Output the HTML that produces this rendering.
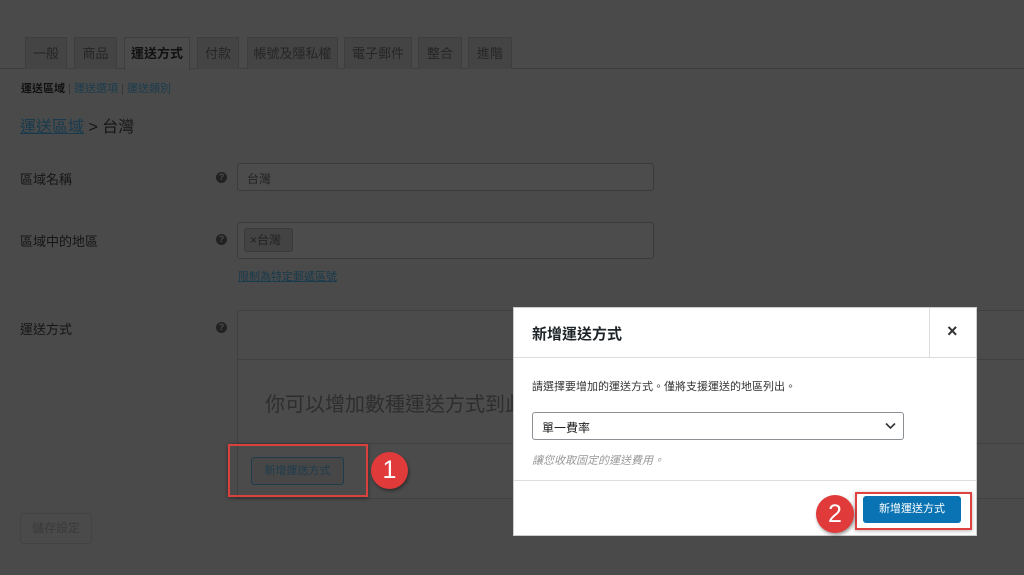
<!DOCTYPE html>
<html><head><meta charset="utf-8"><style>
*{box-sizing:border-box;margin:0;padding:0}
body{width:1024px;height:575px;background:#4a4a4a;font-family:"Liberation Sans","Noto Sans CJK TC",sans-serif;position:relative;overflow:hidden;color:#151515}
.a{position:absolute}
.tab{position:absolute;top:37px;height:32px;background:#444;border:1px solid #3e3e3e;border-bottom:none;font-size:13px;color:#252525;text-align:center;line-height:31px}
.tab.on{background:#4b4b4b;color:#111;font-weight:bold}
.inp{position:absolute;border:1px solid #3a3a3a;border-radius:3px;background:#4c4c4c}
.q{position:absolute;width:11px;height:11px;border-radius:50%;background:#222;color:#4a4a4a;font-size:9px;font-weight:bold;text-align:center;line-height:11px}
.lbl{position:absolute;left:20px;font-size:13px;color:#151515}
</style></head><body>
<div class="a" style="left:0;top:68px;width:1024px;height:1px;background:#3e3e3e"></div>
<div class="tab" style="left:25px;width:42px">一般</div>
<div class="tab" style="left:74px;width:43px">商品</div>
<div class="tab on" style="left:124px;width:66px;height:33px">運送方式</div>
<div class="tab" style="left:197px;width:42px">付款</div>
<div class="tab" style="left:247px;width:91px">帳號及隱私權</div>
<div class="tab" style="left:344px;width:68px">電子郵件</div>
<div class="tab" style="left:418px;width:44px">整合</div>
<div class="tab" style="left:468px;width:44px">進階</div>
<div class="a" style="left:21px;top:80px;font-size:11px;color:#111"><b>運送區域</b> <span style="color:#333">|</span> <span style="color:#1a3c4d">運送選項</span> <span style="color:#333">|</span> <span style="color:#1a3c4d">運送類別</span></div>
<div class="a" style="left:20px;top:113px;font-size:16px;color:#151515"><span style="color:#183b4d;text-decoration:underline">運送區域</span> &gt; 台灣</div>
<div class="lbl" style="top:169px">區域名稱</div>
<div class="q" style="left:216px;top:172px">?</div>
<div class="inp" style="left:237px;top:163px;width:417px;height:28px"><span class="a" style="left:9px;top:6px;font-size:12px;color:#222">台灣</span></div>
<div class="lbl" style="top:231px">區域中的地區</div>
<div class="q" style="left:216px;top:234px">?</div>
<div class="inp" style="left:237px;top:222px;width:417px;height:37px"><div class="a" style="left:6px;top:5px;width:49px;height:24px;border:1px solid #3a3a3a;border-radius:3px;background:#434343;font-size:12px;line-height:22px;padding-left:5px;color:#222">×台灣</div></div>
<div class="a" style="left:238px;top:268px;font-size:11px;color:#183b4d;text-decoration:underline">限制為特定郵遞區號</div>
<div class="lbl" style="top:319px">運送方式</div>
<div class="q" style="left:216px;top:322px">?</div>
<div class="a" style="left:237px;top:310px;width:800px;height:189px;border:1px solid #404040;background:#4b4b4b"></div>
<div class="a" style="left:237px;top:359px;width:800px;height:1px;background:#404040"></div>
<div class="a" style="left:237px;top:443px;width:800px;height:1px;background:#404040"></div>
<div class="a" style="left:265px;top:388px;font-size:20px;color:#2e2e2e;white-space:nowrap">你可以增加數種運送方式到此</div>
<div class="a" style="left:251px;top:457px;width:93px;height:28px;border:1px solid #1e3c4c;border-radius:3px;background:#474747;font-size:11px;color:#1e3c4c;text-align:center;line-height:26px">新增運送方式</div>
<div class="a" style="left:228px;top:444px;width:140px;height:53px;border:2px solid #d9403e;box-shadow:0 1px 4px rgba(0,0,0,.4)"></div>
<div class="a" style="left:371px;top:452px;width:37px;height:37px;border-radius:50%;background:#e03a3a;color:#fff;font-size:25px;text-align:center;line-height:37px;box-shadow:1px 2px 3px rgba(0,0,0,.4)">1</div>
<div class="a" style="left:20px;top:513px;width:72px;height:31px;border:1px solid #434343;border-radius:3px;font-size:12px;color:#3a3a3a;text-align:center;line-height:29px">儲存設定</div>
<div class="a" style="left:513px;top:307px;width:464px;height:229px;background:#fff;border:1px solid #ccc">
 <div class="a" style="left:0;top:0;width:462px;height:50px;border-bottom:1px solid #ddd"></div>
 <div class="a" style="left:415px;top:0;width:1px;height:50px;background:#ddd"></div>
 <div class="a" style="left:18px;top:15px;font-size:15px;color:#1d2327;font-weight:bold">新增運送方式</div>
 <div class="a" style="left:433px;top:13px;font-size:18px;color:#333;font-weight:bold">×</div>
 <div class="a" style="left:18px;top:70px;font-size:11px;color:#333">請選擇要增加的運送方式。僅將支援運送的地區列出。</div>
 <div class="a" style="left:18px;top:104px;width:372px;height:28px;border:1px solid #8c8f94;border-radius:3px;font-size:12px;color:#222;padding:6px 9px">單一費率<svg class="a" style="right:7px;top:9px" width="11" height="8" viewBox="0 0 11 8"><path d="M1 1.5l4.5 4.5 4.5-4.5" fill="none" stroke="#333" stroke-width="1.6"/></svg></div>
 <div class="a" style="left:18px;top:144px;font-size:11px;color:#999;font-style:italic">讓您收取固定的運送費用。</div>
 <div class="a" style="left:0;top:172px;width:462px;height:1px;background:#ddd"></div>
 <div class="a" style="left:349px;top:188px;width:98px;height:27px;background:#0a73b3;border-radius:3px;color:#fff;font-size:11px;text-align:center;line-height:27px">新增運送方式</div>
</div>
<div class="a" style="left:855px;top:492px;width:117px;height:38px;border:2px solid #e04040;box-shadow:0 1px 4px rgba(0,0,0,.3)"></div>
<div class="a" style="left:816px;top:495px;width:38px;height:38px;border-radius:50%;background:#e03a3a;color:#fff;font-size:25px;text-align:center;line-height:38px;box-shadow:1px 2px 3px rgba(0,0,0,.4)">2</div>
</body></html>
